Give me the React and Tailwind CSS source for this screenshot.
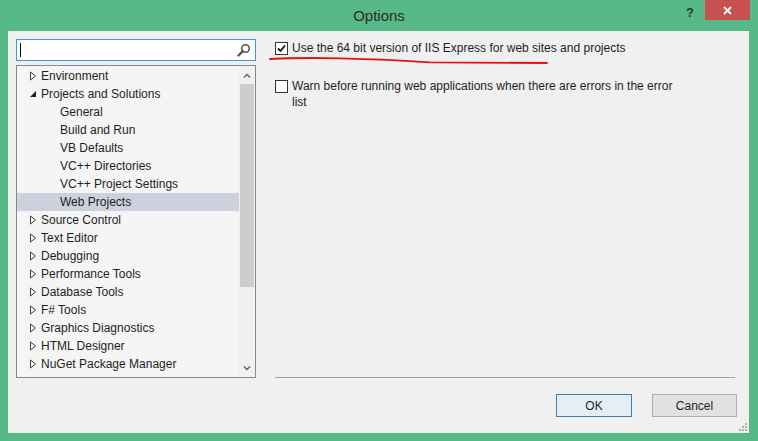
import React from "react";

const treeItems = [
  { label: "Environment", level: 0, state: "closed" },
  { label: "Projects and Solutions", level: 0, state: "open" },
  { label: "General", level: 1 },
  { label: "Build and Run", level: 1 },
  { label: "VB Defaults", level: 1 },
  { label: "VC++ Directories", level: 1 },
  { label: "VC++ Project Settings", level: 1 },
  { label: "Web Projects", level: 1, selected: true },
  { label: "Source Control", level: 0, state: "closed" },
  { label: "Text Editor", level: 0, state: "closed" },
  { label: "Debugging", level: 0, state: "closed" },
  { label: "Performance Tools", level: 0, state: "closed" },
  { label: "Database Tools", level: 0, state: "closed" },
  { label: "F# Tools", level: 0, state: "closed" },
  { label: "Graphics Diagnostics", level: 0, state: "closed" },
  { label: "HTML Designer", level: 0, state: "closed" },
  { label: "NuGet Package Manager", level: 0, state: "closed" },
  { label: "Office Tools", level: 0, state: "closed" },
];

function Expander({ state }) {
  if (state === "open") {
    return (
      <svg width="8" height="8" viewBox="0 0 8 8">
        <path d="M7 1 L7 7 L1 7 Z" fill="#1e1e1e" />
      </svg>
    );
  }
  return (
    <svg width="8" height="10" viewBox="0 0 8 10">
      <path d="M1.5 1 L6.5 5 L1.5 9 Z" fill="none" stroke="#404040" strokeWidth="1" />
    </svg>
  );
}

function TreeRow({ item }) {
  return (
    <div
      className={`flex items-center h-[18px] leading-[18px] whitespace-nowrap ${
        item.selected ? "bg-[#cdd1dd]" : ""
      }`}
    >
      <div className="w-[24px] flex justify-end pr-[4px]">
        {item.state && <Expander state={item.state} />}
      </div>
      <span className={item.level === 1 ? "pl-[19px]" : "pl-0"}>{item.label}</span>
    </div>
  );
}

function Checkbox({ checked }) {
  return (
    <div className="w-[13px] h-[13px] shrink-0 border border-[#333333] bg-white flex items-center justify-center">
      {checked && (
        <svg width="9" height="9" viewBox="0 0 9 9">
          <path d="M1 4.5 L3.5 7 L8 1.5" fill="none" stroke="#111" strokeWidth="1.8" />
        </svg>
      )}
    </div>
  );
}

export default function App() {
  return (
    <div
      className="relative w-[758px] h-[441px] bg-[#58b988] flex flex-col text-[12px] text-[#1e1e1e]"
      style={{ fontFamily: '"Liberation Sans", Arial, sans-serif' }}
    >
      {/* Title bar */}
      <div className="relative h-[31px] flex items-start justify-center">
        <div className="pt-[5px] text-[15px] text-[#2b2b2b]">Options</div>
        <div className="absolute right-[8px] top-0 flex items-start">
          <div className="w-[30px] pt-[3px] text-center text-[13px] font-bold text-[#333]">?</div>
          <div className="w-[45px] h-[20px] bg-[#c75050] flex items-center justify-center">
            <svg width="9" height="9" viewBox="0 0 9 9">
              <path d="M1 1 L8 8 M8 1 L1 8" stroke="#fff" strokeWidth="1.8" />
            </svg>
          </div>
        </div>
      </div>

      {/* Content */}
      <div className="flex-1 ml-[8px] mr-[9px] mb-[8px] bg-[#f0f0f0] flex flex-col pt-[8px] pl-[8px] pr-[14px] relative">
        <div className="flex h-[339px]">
          {/* Left column */}
          <div className="w-[240px] flex flex-col gap-[4px]">
            <div className="h-[22px] bg-white border border-[#3399ff] flex items-center pl-[3px] pr-[4px]">
              <div className="w-[1px] h-[14px] bg-black" />
              <div className="flex-1" />
              <svg width="14" height="14" viewBox="0 0 14 14">
                <circle cx="8.5" cy="5.5" r="3.8" fill="none" stroke="#555" strokeWidth="1.6" />
                <path d="M5.8 8.2 L1.5 12.5" stroke="#555" strokeWidth="2.4" strokeLinecap="round" />
              </svg>
            </div>
            <div className="flex-1 border border-[#828790] bg-[#f5f5f5] flex overflow-hidden">
              <div className="flex-1 overflow-hidden pt-[1px]">
                {treeItems.map((item) => (
                  <TreeRow key={item.label} item={item} />
                ))}
              </div>
              <div className="w-[16px] flex flex-col bg-[#f0f0f0]">
                <div className="h-[18px] flex items-center justify-center">
                  <svg width="8" height="5" viewBox="0 0 8 5">
                    <path d="M1 4.5 L4 1.5 L7 4.5" fill="none" stroke="#606060" strokeWidth="1.4" />
                  </svg>
                </div>
                <div className="flex-1 flex flex-col">
                  <div className="h-[203px] mx-[1px] bg-[#cdcdcd]" />
                </div>
                <div className="h-[18px] flex items-center justify-center">
                  <svg width="8" height="5" viewBox="0 0 8 5">
                    <path d="M1 0.5 L4 3.5 L7 0.5" fill="none" stroke="#606060" strokeWidth="1.4" />
                  </svg>
                </div>
              </div>
            </div>
          </div>

          {/* Right column */}
          <div className="flex-1 ml-[19px] flex flex-col border-b border-[#a0a0a0]">
            <div className="flex items-start gap-[4px] mt-[3px]">
              <Checkbox checked />
              <div className="leading-[13px]">Use the 64 bit version of IIS Express for web sites and projects</div>
            </div>
            <div className="flex items-start gap-[4px] mt-[25px] w-[400px]">
              <Checkbox />
              <div className="leading-[16px] -mt-[2px]">
                Warn before running web applications when there are errors in the error list
              </div>
            </div>
          </div>
        </div>

        {/* Buttons */}
        <div className="flex justify-end gap-[20px] mt-[16px]">
          <button className="w-[76px] h-[23px] border border-[#3c7fb1] bg-[#e5edf5] text-[12px] text-[#1e1e1e]">
            OK
          </button>
          <button className="w-[85px] h-[23px] border border-[#adadad] bg-[#e1e1e1] text-[12px] text-[#1e1e1e] -mr-[2px]">
            Cancel
          </button>
        </div>

        {/* Resize grip */}
        <svg className="absolute right-[1px] bottom-[1px]" width="10" height="10" viewBox="0 0 10 10">
          <g fill="#b0b0b0">
            <rect x="7" y="1" width="2" height="2" />
            <rect x="4" y="4" width="2" height="2" />
            <rect x="7" y="4" width="2" height="2" />
            <rect x="1" y="7" width="2" height="2" />
            <rect x="4" y="7" width="2" height="2" />
            <rect x="7" y="7" width="2" height="2" />
          </g>
        </svg>
      </div>

      {/* Red annotation underline */}
      <svg className="absolute left-0 top-0 pointer-events-none" width="758" height="441" viewBox="0 0 758 441">
        <path
          d="M270 59 Q 300 57.5 340 58.3 Q 390 59.5 430 62.3 L 547 63"
          fill="none"
          stroke="#e41212"
          strokeWidth="1.8"
          strokeLinecap="round"
        />
      </svg>
    </div>
  );
}
